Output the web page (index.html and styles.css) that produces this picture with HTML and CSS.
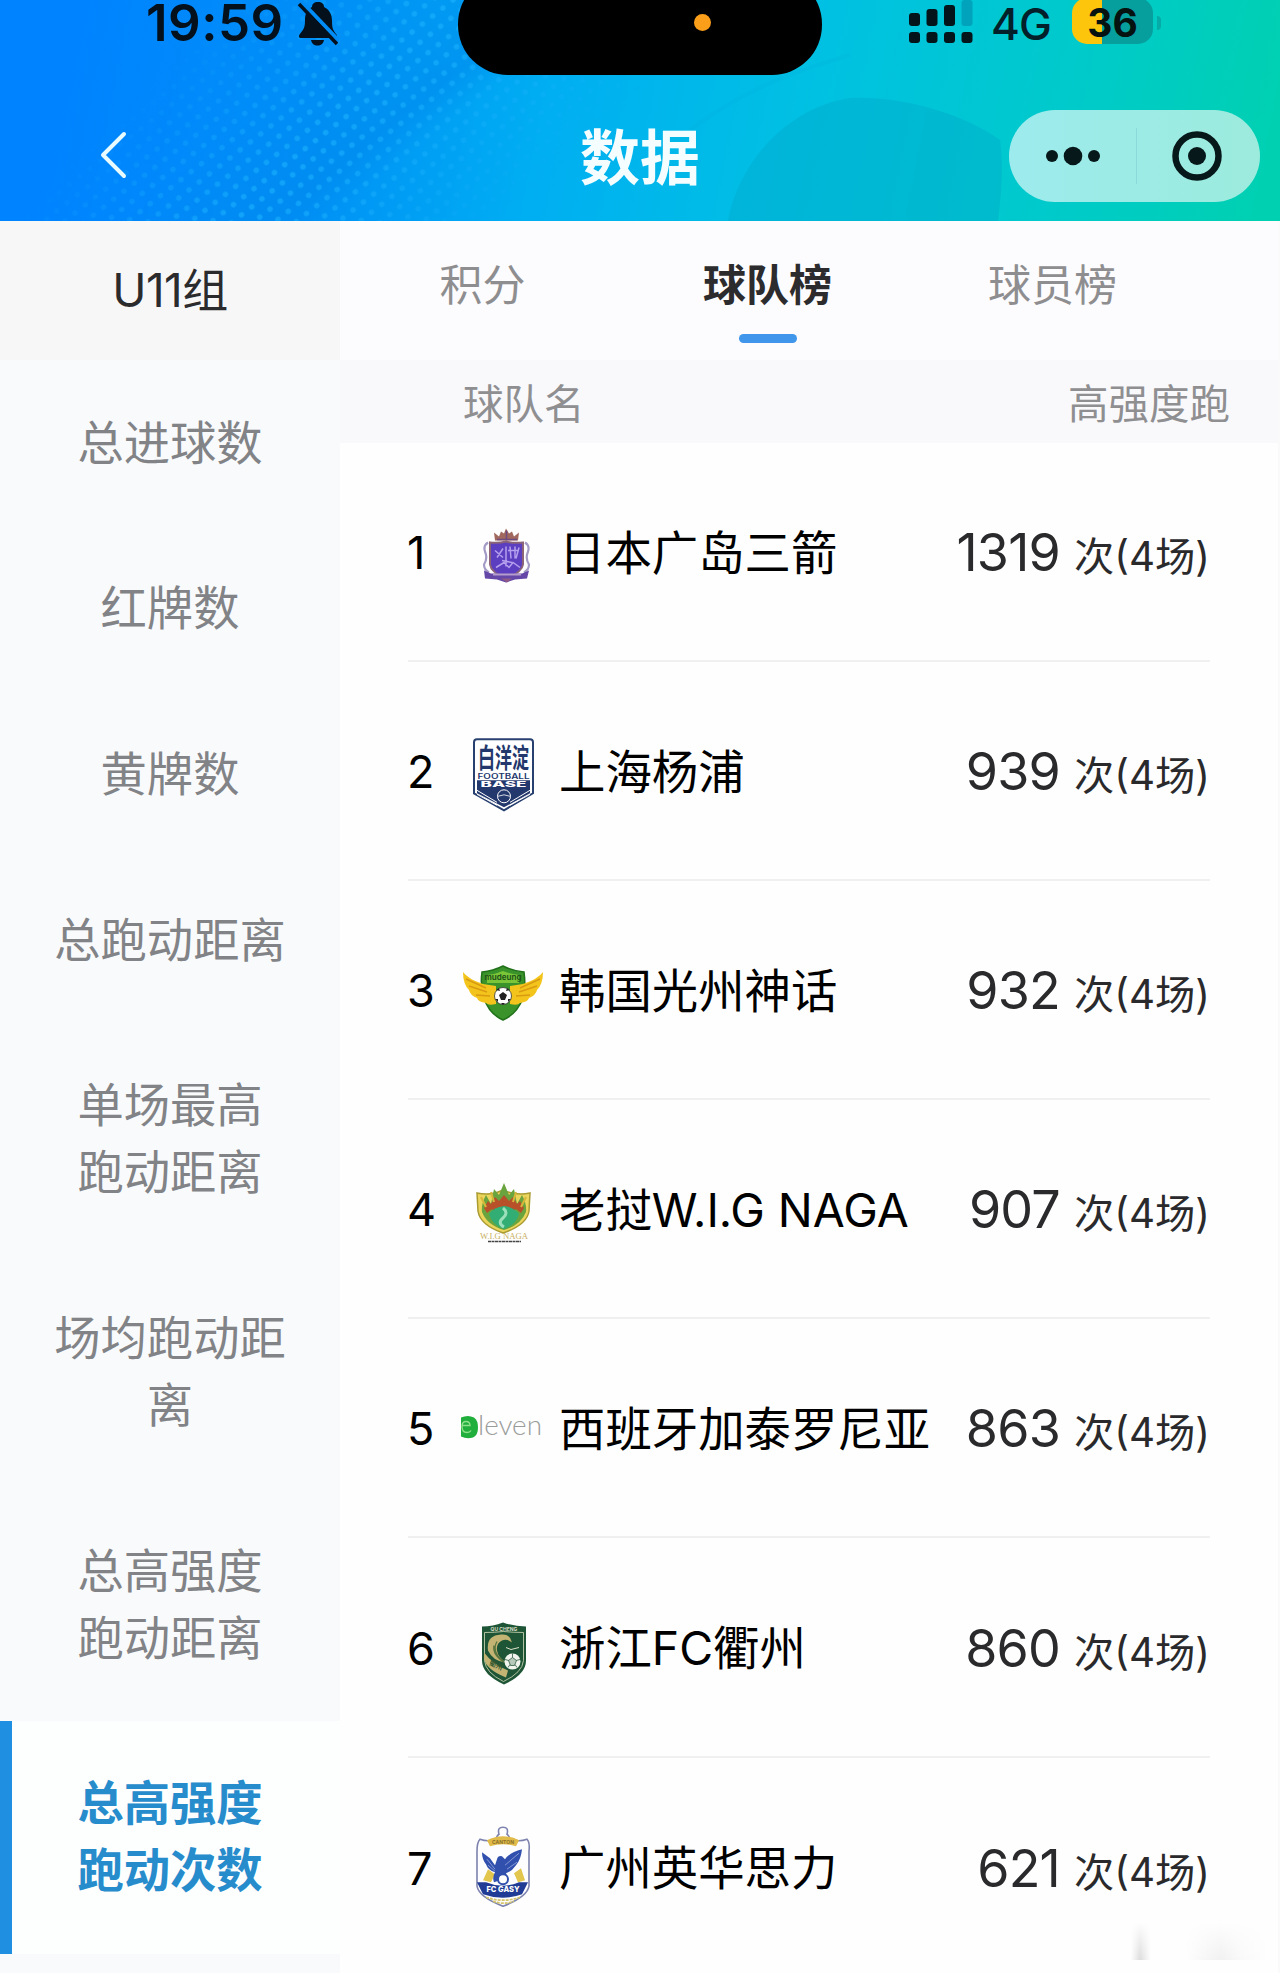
FILE: index.html
```html
<!DOCTYPE html>
<html lang="zh-CN">
<head>
    <meta charset="UTF-8">
    <meta name="viewport" content="width=device-width, initial-scale=1.0">
    <title>数据</title>
    <link rel="stylesheet" href="styles.css">
</head>
<body>
    <header class="header">
        <svg class="header-bg" viewBox="0 0 1280 221" preserveAspectRatio="none">
            <defs>
                <linearGradient id="sky" gradientUnits="userSpaceOnUse" x1="80" y1="0" x2="1250" y2="240">
                    <stop offset="0" stop-color="#0083ff"/>
                    <stop offset="0.22" stop-color="#0090f6"/>
                    <stop offset="0.4" stop-color="#00aef2"/>
                    <stop offset="0.62" stop-color="#00c1e2"/>
                    <stop offset="0.85" stop-color="#00cbc8"/>
                    <stop offset="1" stop-color="#00d0b2"/>
                </linearGradient>
                <linearGradient id="fade" gradientUnits="userSpaceOnUse" x1="200" y1="30" x2="450" y2="280">
                    <stop offset="0" stop-color="#fff" stop-opacity="0"/>
                    <stop offset="0.45" stop-color="#fff"/>
                    <stop offset="0.65" stop-color="#fff" stop-opacity="0.8"/>
                    <stop offset="1" stop-color="#fff" stop-opacity="0"/>
                </linearGradient>
                <linearGradient id="band" gradientUnits="userSpaceOnUse" x1="310" y1="60" x2="395" y2="165">
                    <stop offset="0" stop-color="#0088ec" stop-opacity="0"/>
                    <stop offset="0.75" stop-color="#0088ec" stop-opacity="0.5"/>
                    <stop offset="1" stop-color="#0088ec" stop-opacity="0"/>
                </linearGradient>
                <pattern id="dots" width="13" height="13" patternUnits="userSpaceOnUse" patternTransform="rotate(-38)">
                    <circle cx="6" cy="6" r="2.8" fill="#1cb4ff" fill-opacity="0.6"/>
                </pattern>
                <mask id="dotMask"><rect width="1280" height="221" fill="url(#fade)"/></mask>
            </defs>
            <rect width="1280" height="221" fill="url(#sky)"/>
            <path d="M80 221 L360 0 H620 L340 221 Z" fill="url(#band)"/>
            <rect width="700" height="221" fill="url(#dots)" mask="url(#dotMask)"/>
            <path d="M728 221 C738 165 785 108 850 98 C905 96 965 115 1000 140 C1004 170 1001 195 998 221 Z" fill="#00a5c8" fill-opacity="0.38"/>
            <path d="M690 130 C750 85 800 70 850 55" fill="none" stroke="#00a5d8" stroke-opacity="0.12" stroke-width="4"/>
        </svg>

        <div class="status-bar">
            <div class="status-left">
                <span class="time">19:59</span>
                <svg class="bell" viewBox="0 0 42 46">
                    <path d="M21 2c-4 0-6 2-6 5-6 3-7 8-7 14 0 7-2 9-5 13-2 2-1 4 1 4h34c2 0 3-2 1-4-3-4-4-6-4-13 0-6-2-11-8-14 0-3-2-5-6-5z"/>
                    <path d="M14 40h13c-1 4-3 5.500-6.500 5.500S15 44 14 40z"/>
                    <path class="bell-gap" d="M4 1l38 40"/>
                    <path class="bell-slash" d="M2 4l38 40"/>
                </svg>
            </div>
            <div class="island"><span class="island-dot"></span></div>
            <div class="status-right">
                <svg class="signal" viewBox="0 0 64 44">
                    <rect x="0" y="13" width="11" height="13" rx="3"/>
                    <rect x="17.500" y="9" width="11" height="17" rx="3"/>
                    <rect x="35" y="5" width="11" height="21" rx="3"/>
                    <rect x="52.500" y="0" width="11" height="26" rx="3" class="weak"/>
                    <rect x="0" y="32" width="11" height="11" rx="3"/>
                    <rect x="17.500" y="32" width="11" height="11" rx="3"/>
                    <rect x="35" y="32" width="11" height="11" rx="3"/>
                    <rect x="52.500" y="32" width="11" height="11" rx="3"/>
                </svg>
                <span class="network">4G</span>
                <span class="battery">36</span>
                <span class="battery-cap"></span>
            </div>
        </div>

        <nav class="nav-bar">
            <svg class="back" viewBox="0 0 28 48">
                <path d="M25 3L4 24l21 21"/>
            </svg>
            <h1 class="title">数据</h1>
            <div class="capsule">
                <svg class="more" viewBox="0 0 56 20">
                    <circle cx="7" cy="10" r="6"/>
                    <circle cx="28" cy="10" r="9.300"/>
                    <circle cx="49" cy="10" r="6"/>
                </svg>
                <span class="capsule-line"></span>
                <svg class="target" viewBox="0 0 50 50">
                    <circle cx="25" cy="25" r="21.500" class="ring"/>
                    <circle cx="25" cy="25" r="9"/>
                </svg>
            </div>
        </nav>
    </header>

    <main class="content">
        <aside class="sidebar">
            <div class="group">U11组</div>
            <ul class="menu">
                <li class="menu-item">总进球数</li>
                <li class="menu-item">红牌数</li>
                <li class="menu-item">黄牌数</li>
                <li class="menu-item">总跑动距离</li>
                <li class="menu-item">单场最高<br>跑动距离</li>
                <li class="menu-item">场均跑动距<br>离</li>
                <li class="menu-item">总高强度<br>跑动距离</li>
                <li class="menu-item active">总高强度<br>跑动次数</li>
            </ul>
        </aside>

        <section class="board">
            <div class="tabs">
                <div class="tab">积分</div>
                <div class="tab active">球队榜</div>
                <div class="tab">球员榜</div>
            </div>
            <div class="table-head">
                <span>球队名</span>
                <span>高强度跑</span>
            </div>
            <ol class="teams">
                <li class="team">
                    <span class="rank">1</span>
                    <svg class="logo" viewBox="11 0.500 84 84">
                        <path d="M45 30l-1-8 5 4 2-5 3 2 2-5 3 5 3-2 2 5 5-4-1 8z" fill="#a0685e"/>
                        <path d="M47 29h20M56.500 20v10" stroke="#6d4a80" stroke-width="1.500"/>
                        <path d="M38 32q-5 3-3 9 3 7-1 13 0 5 5 8M75 32q5 3 3 9-3 7 1 13 0 5-5 8" fill="none" stroke="#a49ac6" stroke-width="2.200"/>
                        <path d="M40 32q8 1 16-1 8 2 17 1v22q-1 8-17 14-15-6-16-14z" fill="#5b3fc0" stroke="#8b6478" stroke-width="2"/>
                        <path d="M45 40l8 7M53 38l-6 9M56 36v20M60 36l1 12M65 36v12M69 37l-3 11M58 40h11M46 57l8-5 5 5 4-5 7 5M52 50l10 2" fill="none" stroke="#b4a0ee" stroke-width="1.500"/>
                        <path d="M34 60l7 3h31l7-3-2 8-12 1-9 3-9-3-12-1z" fill="#6547a8"/>
                        <path d="M43 64h28" stroke="#b49ccc" stroke-width="2"/>
                        <path d="M51 68h11l-5 4z" fill="#8d5a86"/>
                    </svg>
                    <span class="name">日本广岛三箭</span>
                    <span class="value"><b>1319</b>次(4场)</span>
                </li>
                <li class="team">
                    <span class="rank">2</span>
                    <svg class="logo" viewBox="11 4.700 84 84">
                        <path d="M27 14h53q3 0 3 3v51L54 85 24 68V17q0-3 3-3z" fill="#fff" stroke="#284070" stroke-width="2"/>
                        <text class="t-crest" transform="translate(53.500 43) scale(1 1.600)">白洋淀</text>
                        <text x="53.500" y="54" class="t-foot" textLength="52" lengthAdjust="spacingAndGlyphs">FOOTBALL</text>
                        <path d="M27 55h53v13L54 82 27 68z" fill="#23386c"/>
                        <text x="53.500" y="61.500" class="t-base" textLength="46" lengthAdjust="spacingAndGlyphs">BASE</text>
                        <path d="M27 65l20 12M80 65L60 77M27 69l20 11M80 69L60 80" stroke="#fff" stroke-width="1"/>
                        <circle cx="54" cy="71" r="6.500" fill="#23386c" stroke="#fff"/>
                        <path d="M48 71q6-3 12 0" fill="none" stroke="#fff" stroke-width="0.800"/>
                    </svg>
                    <span class="name">上海杨浦</span>
                    <span class="value"><b>939</b>次(4场)</span>
                </li>
                <li class="team">
                    <span class="rank">3</span>
                    <svg class="logo" viewBox="11 -1 84 84">
                        <path d="M32 22q11-1 21-6 10 5 21 6 2 14-1 26-6 16-20 22-14-6-19-22-4-12-2-26z" fill="#39922a" stroke="#207119" stroke-width="1.500"/>
                        <path d="M37 25q9-1 16-4 7 3 16 4v8H37z" fill="#7bc638"/>
                        <path d="M13 22q5 7 20 12l13 2v18q-8 2-10-1-8-1-9-5-7-3-8-8-6-6-6-18z" fill="#f3c51c"/>
                        <path d="M93 22q-5 7-20 12l-13 2v18q8 2 10-1 8-1 9-5 7-3 8-8 6-6 6-18z" fill="#f3c51c"/>
                        <path d="M16 29l20 9M19 36l18 6M26 45l14 1M90 29l-20 9M87 36l-18 6M80 45l-14 1" stroke="#d99a12" stroke-width="1.500"/>
                        <text x="53" y="30" class="t-mudeung">mudeung</text>
                        <circle cx="53" cy="46" r="8.500" fill="#fff" stroke="#333" stroke-width="0.800"/>
                        <path d="M53 42l4 3-2 5h-4l-2-5zM46 40l3-2 1 3zM60 40l-3-2-1 3zM45 49l3 0 0 3zM61 49l-3 0 0 3zM51 53h4l-2 2z" fill="#222"/>
                    </svg>
                    <span class="name">韩国光州神话</span>
                    <span class="value"><b>932</b>次(4场)</span>
                </li>
                <li class="team">
                    <span class="rank">4</span>
                    <svg class="logo" viewBox="11 -2 84 84">
                        <path d="M27 23q14 3 26-3 13 6 27 3l-1 18q-2 14-26 22-23-8-25-22z" fill="#ecd55c" stroke="#a99b32" stroke-width="1.500"/>
                        <path d="M32 42q-1-8 4-17l5 9 3-15 5 6 5-12 5 12 5-6 3 15 5-9q5 9 4 17-5 13-22 18-17-5-22-18z" fill="#6aa43e"/>
                        <path d="M34 38l4-7 3 3 4-7 4 4 5-6 5 6 4-4 4 7 3-3 4 7-3 5-5-4-3 3-4-5-5 4-5-4-4 5-3-3-5 4z" fill="#b8502a"/>
                        <path d="M39 44q5-7 15-8 10 1 15 8-3 11-15 15-12-4-15-15z" fill="#32ad73"/>
                        <path d="M53 38q6 5 0 10t1 9" fill="none" stroke="#9be0bb" stroke-width="3"/>
                        <path d="M31 27l5 10M76 27l-5 10M41 22l3 10M66 22l-3 10" stroke="#d8b63a" stroke-width="2"/>
                        <text x="54" y="69" class="t-naga" textLength="48" lengthAdjust="spacingAndGlyphs">W.I.G NAGA</text>
                        <path d="M38 71.500h33" stroke="#444" stroke-width="1.500" stroke-dasharray="3 0.500"/>
                    </svg>
                    <span class="name">老挝W.I.G NAGA</span>
                    <span class="value"><b>907</b>次(4场)</span>
                </li>
                <li class="team">
                    <span class="rank">5</span>
                    <svg class="logo" viewBox="11 -7.500 84 84">
                        <path d="M11 23q7-3 13 0 4 3 4 10 0 8-5 10-6 2-12-1z" fill="#20ae3c"/>
                        <path d="M12 31h8q0-4-4-4-4 0-4 5 0 6 5 6 3 0 4-2" fill="none" stroke="#8fe08c" stroke-width="1.400"/>
                        <text x="28" y="40" class="t-eleven" textLength="64" lengthAdjust="spacingAndGlyphs">leven</text>
                    </svg>
                    <span class="name">西班牙加泰罗尼亚</span>
                    <span class="value"><b>863</b>次(4场)</span>
                </li>
                <li class="team">
                    <span class="rank">6</span>
                    <svg class="logo" viewBox="11 6.500 84 84">
                        <path d="M32 27q11 0 21-4 11 4 23 4v34q0 14-22 24-22-10-22-24z" fill="#1e5536"/>
                        <path d="M34.500 33q10 0 19-1 10 1 20 1v28q-1 12-20 21-18-9-19-21z" fill="none" stroke="#c2cdaa" stroke-width="0.900"/>
                        <text x="54" y="31" class="t-cheng">QU CHENG</text>
                        <path d="M38 51q-2-15 13-16 9-1 11 8-5-4-10-2-6 3-5 10 1 7 9 12-13-1-18-12z" fill="#c4b474"/>
                        <path d="M34 53q9 12 24 18l-2 7q-20-8-22-19z" fill="#c4b474"/>
                        <path d="M47 42q-7 12 11 23M44 46q-2 10 12 18" fill="none" stroke="#58743e" stroke-width="1.300"/>
                        <path d="M56 48l5 2 8-2" fill="none" stroke="#dfe3c9"/>
                        <circle cx="62.500" cy="62" r="8" fill="#f2f5ee"/>
                        <path d="M62.500 58l4 3-2 5h-4l-2-5zM62.500 54v4M70 60l-4 1M58 68l2-3M67 68l-2-3M55 60l4 1" fill="#b7c9ba" stroke="#426a50" stroke-width="0.900"/>
                        <text x="45" y="68" class="t-qu" transform="rotate(25 45 68)">衢州</text>
                    </svg>
                    <span class="name">浙江FC衢州</span>
                    <span class="value"><b>860</b>次(4场)</span>
                </li>
                <li class="team">
                    <span class="rank">7</span>
                    <svg class="logo" viewBox="11 15.800 84 84">
                        <path d="M46 29q1-4 3-5-2-7 4-7t4 7q2 1 3 5 9 3 17 0 3 3 2 12v35q-2 11-26 20-24-9-26-20V41q0-9 3-12 8 3 16 0z" fill="#fdfdff" stroke="#7d83ae" stroke-width="1.600"/>
                        <path d="M37 30q8-4 16-4t16 4l-3 6q-13-4-26 0z" fill="#e0bb49"/>
                        <text x="53" y="33.500" class="t-canton">CANTON</text>
                        <path d="M33 70l5-11 7 5-4 8zM75 70l-4-12-7 5 4 9z" fill="#e3c64e"/>
                        <path d="M32 42l8 6 5 7 2-6q1-4 5-3l3 3q5-7 17-10-1 10-6 16-4 6-10 8 2 4 0 9l-6-2-6 2q-2-5 1-10-7-2-9-8-4-5-4-12z" fill="#3150ae"/>
                        <path d="M55 55l14-12M57 59l10-7M37 49l8 10M38 55l7 6" stroke="#8498d5" stroke-width="1"/>
                        <circle cx="53" cy="69" r="5" fill="#fff" stroke="#3150ae" stroke-width="2"/>
                        <path d="M27 72l9 0q17 7 33 0l9 0-6 12q-19 7-39 0z" fill="#203c95"/>
                        <text x="53" y="81.500" class="t-gasy" textLength="33" lengthAdjust="spacingAndGlyphs">FC GASY</text>
                        <path d="M36 87q17 6 34 0M43 91q10 4 21 0" fill="none" stroke="#d4c46a" stroke-width="1.700" stroke-dasharray="3 1"/>
                    </svg>
                    <span class="name">广州英华思力</span>
                    <span class="value"><b>621</b>次(4场)</span>
                </li>
            </ol>
        </section>
    </main>
    <div class="watermark"></div>
</body>
</html>
```

FILE: styles.css
```css
* {
    box-sizing: border-box;
}

body {
    position: relative;
    width: 1280px;
    height: 1973px;
    margin: 0;
    overflow: hidden;
    font-family: Inter, "Noto Sans CJK SC", sans-serif;
    background-color: #fefefe;
    color: #000;
}

ul, ol {
    list-style: none;
    margin: 0;
    padding: 0;
}

/* header */
.header {
    position: relative;
    height: 221px;
    overflow: hidden;
}

.header-bg {
    position: absolute;
    top: 0;
    left: 0;
    width: 1280px;
    height: 221px;
}

.status-bar {
    position: relative;
    display: flex;
    justify-content: space-between;
    height: 76px;
    padding: 0 119px 0 146px;
}

.status-left, .status-right {
    display: flex;
    align-items: center;
    height: 46px;
}

.time {
    width: 138px;
    font-size: 51px;
    font-weight: 600;
    line-height: 46px;
    letter-spacing: 0.5px;
    white-space: nowrap;
    color: #04101c;
}

.bell {
    width: 42px;
    height: 46px;
    margin-left: 13px;
    fill: #04101c;
}

.bell-gap {
    stroke: #008cf6;
    stroke-width: 4;
}

.bell-slash {
    stroke: #04101c;
    stroke-width: 3.5;
}

.island {
    position: absolute;
    top: -26px;
    left: 458px;
    width: 364px;
    height: 101px;
    border-radius: 50px;
    background-color: #000;
}

.island-dot {
    position: absolute;
    top: 40px;
    left: 236px;
    width: 17px;
    height: 17px;
    border-radius: 50%;
    background-color: #fb9f1a;
}

.signal {
    width: 64px;
    height: 44px;
    margin-bottom: 2px;
    fill: #03151a;
}

.signal .weak {
    fill: #00a3bb;
}

.network {
    width: 59px;
    margin: 2px 0 0 18px;
    font-size: 44px;
    font-weight: 500;
    line-height: 48px;
    letter-spacing: -1px;
    color: #03202a;
}

.battery {
    width: 81px;
    height: 46px;
    margin: -5px 0 0 22px;
    border-radius: 15px;
    background: linear-gradient(to right, #fdc60c 30px, #079f9d 30px);
    font-size: 39px;
    font-weight: 700;
    line-height: 49px;
    text-align: center;
    color: #05120f;
}

.battery-cap {
    width: 4px;
    height: 14px;
    margin-left: 4px;
    border-radius: 0 4px 4px 0;
    background-color: #06aaa6;
}

.nav-bar {
    position: relative;
    display: flex;
    align-items: center;
    height: 160px;
    padding: 0 20px 0 99px;
}

.back {
    width: 28px;
    height: 48px;
    margin-bottom: 2px;
    fill: none;
    stroke: #e8fbff;
    stroke-width: 4;
    stroke-linecap: round;
    stroke-linejoin: round;
}

.title {
    margin: 3px 0 0 453px;
    font-size: 60px;
    font-weight: 700;
    line-height: 80px;
    color: #f4fdff;
}

.capsule {
    display: flex;
    align-items: center;
    width: 251px;
    height: 92px;
    margin-left: auto;
    padding-left: 36px;
    border-radius: 46px;
    background: linear-gradient(to right, #9debed, #9cebdd);
    fill: #07181a;
}

.more {
    width: 56px;
    height: 20px;
}

.capsule-line {
    width: 1px;
    height: 56px;
    margin: 0 35px 0 35px;
    background-color: #8bd9d9;
}

.target {
    width: 50px;
    height: 50px;
}

.ring {
    fill: none;
    stroke: #07181a;
    stroke-width: 6.5;
}

/* layout */
.content {
    display: flex;
    height: 1752px;
}

.sidebar {
    width: 340px;
    background-color: #f9fafc;
}

.group {
    height: 139px;
    font-size: 46px;
    line-height: 138px;
    letter-spacing: -0.5px;
    text-align: center;
    background-color: #f8f7f8;
    color: #2b2b2e;
}

.menu-item {
    padding: 49.5px 0 49.2px;
    font-size: 46.3px;
    line-height: 67px;
    text-align: center;
    color: #818386;
}

.menu-item.active {
    padding-right: 12px;
    border-left: 12px solid #1f8fe2;
    background-color: #fdfefe;
    font-weight: 700;
    color: #278ccc;
}

.board {
    width: 940px;
    border-right: 2px solid #fafafb;
}

/* tabs */
.tabs {
    display: flex;
    height: 139px;
    padding-right: 83px;
    background-color: #fcfbfd;
}

.tab {
    display: flex;
    flex: 1;
    flex-direction: column;
    align-items: center;
    padding-top: 33px;
    font-size: 43px;
    line-height: 62px;
    color: #8e8e90;
}

.tab.active {
    font-weight: 700;
    color: #2c2b2d;
}

.tab.active::after {
    content: "";
    width: 58px;
    height: 9px;
    margin-top: 18px;
    border-radius: 5px;
    background-color: #4096ea;
}

.table-head {
    display: flex;
    justify-content: space-between;
    height: 83px;
    padding: 0 48px 0 123px;
    font-size: 40.5px;
    line-height: 89px;
    background-color: #f9f9fb;
    color: #8f8f92;
}

/* ranking list */
.teams {
    padding: 0 68px;
}

.team {
    display: flex;
    align-items: center;
    height: 219.1px;
    padding-top: 2px;
    border-bottom: 2px solid #f0f0f1;
    font-size: 46.4px;
}

.team:last-child {
    border-bottom: none;
}

.rank {
    width: 53px;
    margin-left: -1px;
    font-size: 45px;
}

.logo {
    width: 84px;
    height: 84px;
    margin-left: 1px;
    overflow: visible;
}

.name {
    margin: 0 0 7px 14px;
    white-space: nowrap;
}

.value {
    margin-left: auto;
    font-size: 40.3px;
    white-space: nowrap;
    color: #2a2a2c;
}

.value b {
    margin-right: 14px;
    font-size: 52px;
    font-weight: 400;
    letter-spacing: -0.8px;
}

/* lettering inside the crests */
.logo text {
    text-anchor: middle;
}

.t-crest {
    font-size: 17px;
    font-weight: 700;
    fill: #23386c;
}

.t-foot {
    font-size: 7px;
    font-weight: 600;
    fill: #23386c;
}

.t-base {
    font-size: 7px;
    font-weight: 800;
    fill: #fff;
}

.t-mudeung {
    font-size: 8px;
    font-weight: 700;
    fill: #1f5418;
}

.t-naga {
    font-family: "Liberation Serif", serif;
    font-size: 8px;
    fill: #c8b060;
}

.logo .t-eleven {
    font-family: Lato, sans-serif;
    font-size: 27px;
    font-weight: 300;
    text-anchor: start;
    fill: #9a9c9a;
}

.t-cheng {
    font-size: 5px;
    font-weight: 700;
    fill: #d6dcc4;
}

.t-qu {
    font-size: 7px;
    font-weight: 700;
    fill: #35582f;
}

.t-canton {
    font-size: 5px;
    font-weight: 700;
    fill: #8b702a;
}

.t-gasy {
    font-size: 8px;
    font-weight: 800;
    fill: #fff;
}

.watermark {
    position: absolute;
    right: 12px;
    bottom: 13px;
    width: 137px;
    height: 38px;
    background: linear-gradient(to right, rgba(0, 0, 0, 0) 0, rgba(0, 0, 0, 0.13) 9px, rgba(0, 0, 0, 0) 20px, rgba(0, 0, 0, 0) 55px, rgba(0, 0, 0, 0.03) 75px, rgba(0, 0, 0, 0.05) 90px, rgba(0, 0, 0, 0.02) 110px, rgba(0, 0, 0, 0));
    -webkit-mask-image: linear-gradient(to bottom, transparent, #000);
    mask-image: linear-gradient(to bottom, transparent, #000);
}
```
